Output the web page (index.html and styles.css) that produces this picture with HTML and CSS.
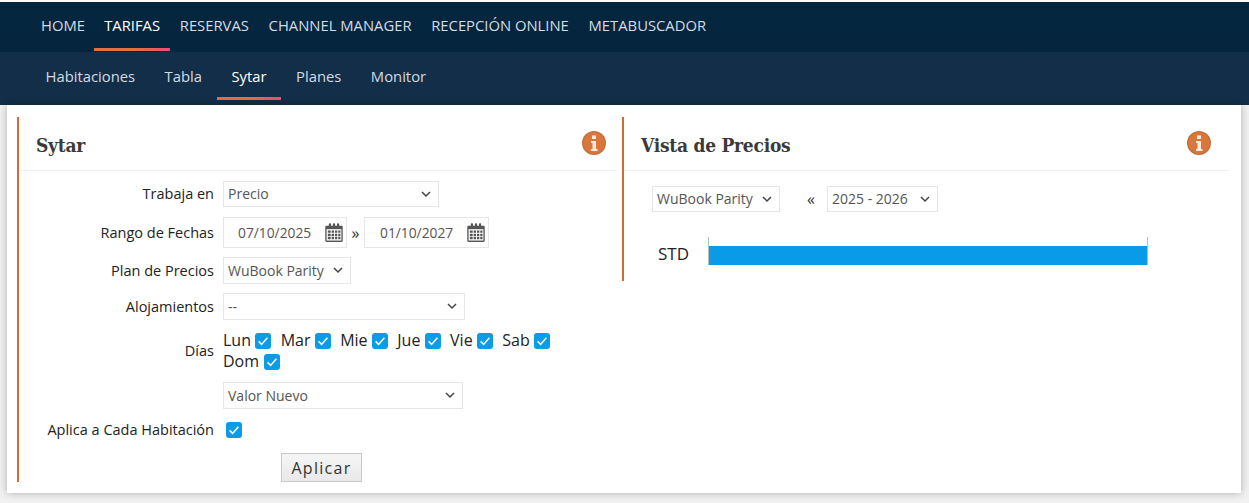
FILE: index.html
```html
<!DOCTYPE html>
<html lang="es">
<head>
<meta charset="utf-8">
<title>Sytar</title>
<link rel="stylesheet" href="styles.css">
</head>
<body>
<svg class="defs" width="0" height="0" aria-hidden="true">
  <defs>
    <symbol id="chk" viewBox="0 0 16 16">
      <rect width="16" height="16" rx="3" fill="#0c9be6"/>
      <path d="M3.6 8.4l3 3 5.8-6.6" fill="none" stroke="#fff" stroke-width="1.5"/>
    </symbol>
    <symbol id="cal" viewBox="0 0 19 20">
      <path fill="#555" d="M1.5 3H4V1.5a1.2 1.2 0 0 1 2.4 0V3h1.9V1.5a1.2 1.2 0 0 1 2.4 0V3h1.9V1.5a1.2 1.2 0 0 1 2.4 0V3h2.5A1.2 1.2 0 0 1 18.7 4.2v14.6a1.2 1.2 0 0 1-1.2 1.2h-16A1.2 1.2 0 0 1 .3 18.800V4.200A1.2 1.2 0 0 1 1.500 3z"/>
      <rect x="1.700" y="6.500" width="15.600" height="12" fill="#fff"/>
      <path fill="#555" d="M3 8h3v2.300H3zM7 8h2.500v2.300H7zM10.500 8H13v2.300h-2.500zM14 8h2.300v2.300H14zM3 11.300h3v2.300H3zM7 11.300h2.500v2.300H7zM10.500 11.300H13v2.300h-2.500zM14 11.300h2.300v2.300H14zM3 14.600h3V17H3zM7 14.600h2.500V17H7zM10.500 14.600H13V17h-2.500zM14 14.600h2.300V17H14z"/>
    </symbol>
    <symbol id="info" viewBox="0 0 24 24">
      <circle cx="12" cy="12" r="12" fill="#c0703f"/>
      <circle cx="12" cy="12" r="10.700" fill="#d9763a"/>
      <path fill="#fbeadf" d="M10 4.500h4v3.500h-4zM9 10h5v8h1.500v2h-6.500v-2h1.500v-6H9z"/>
    </symbol>
  </defs>
</svg>

<header class="topbar">
  <nav class="mainnav">
    <a class="mainlink" href="#">HOME</a>
    <a class="mainlink is-active" href="#">TARIFAS</a>
    <a class="mainlink" href="#">RESERVAS</a>
    <a class="mainlink" href="#">CHANNEL MANAGER</a>
    <a class="mainlink" href="#">RECEPCIÓN ONLINE</a>
    <a class="mainlink" href="#">METABUSCADOR</a>
  </nav>
  <nav class="subnav">
    <a class="sublink" href="#">Habitaciones</a>
    <a class="sublink" href="#">Tabla</a>
    <a class="sublink is-active" href="#">Sytar</a>
    <a class="sublink" href="#">Planes</a>
    <a class="sublink" href="#">Monitor</a>
  </nav>
</header>

<main class="card">
  <section class="panel panel-form">
    <div class="panel-head">
      <h2 class="panel-title">Sytar</h2>
      <svg class="info-icon"><use href="#info"/></svg>
    </div>
    <form class="form">
      <div class="row row-1">
        <label class="row-label">Trabaja en</label>
        <select class="sel w-216"><option>Precio</option></select>
      </div>
      <div class="row row-2">
        <label class="row-label">Rango de Fechas</label>
        <div class="dates">
          <span class="date"><span class="date-text">07/10/2025</span><svg class="cal"><use href="#cal"/></svg></span>
          <span class="date-sep">»</span>
          <span class="date"><span class="date-text">01/10/2027</span><svg class="cal"><use href="#cal"/></svg></span>
        </div>
      </div>
      <div class="row row-3">
        <label class="row-label">Plan de Precios</label>
        <select class="sel w-128"><option>WuBook Parity</option></select>
      </div>
      <div class="row row-4">
        <label class="row-label">Alojamientos</label>
        <select class="sel w-242"><option>--</option></select>
      </div>
      <div class="row row-5">
        <label class="row-label">Días</label>
        <div class="days">
          <span class="day">Lun<svg class="chk"><use href="#chk"/></svg></span>
          <span class="day">Mar<svg class="chk"><use href="#chk"/></svg></span>
          <span class="day">Mie<svg class="chk"><use href="#chk"/></svg></span>
          <span class="day">Jue<svg class="chk"><use href="#chk"/></svg></span>
          <span class="day">Vie<svg class="chk"><use href="#chk"/></svg></span>
          <span class="day">Sab<svg class="chk"><use href="#chk"/></svg></span>
          <span class="day">Dom<svg class="chk"><use href="#chk"/></svg></span>
        </div>
      </div>
      <div class="row row-6">
        <span class="row-label"></span>
        <select class="sel w-240"><option>Valor Nuevo</option></select>
      </div>
      <div class="row row-7">
        <label class="row-label">Aplica a Cada Habitación</label>
        <svg class="chk chk-solo"><use href="#chk"/></svg>
      </div>
      <div class="actions"><button class="btn" type="button">Aplicar</button></div>
    </form>
  </section>

  <section class="panel panel-view">
    <div class="panel-head">
      <h2 class="panel-title">Vista de Precios</h2>
      <svg class="info-icon"><use href="#info"/></svg>
    </div>
    <div class="view-controls">
      <select class="sel w-128"><option>WuBook Parity</option></select>
      <span class="prev">«</span>
      <select class="sel w-111"><option>2025 - 2026</option></select>
    </div>
    <div class="chart">
      <span class="chart-label">STD</span>
      <div class="chart-track"><div class="chart-bar"></div></div>
    </div>
  </section>
</main>
</body>
</html>
```
FILE: styles.css
```css
* { box-sizing: border-box; }
html, body { margin: 0; padding: 0; }
body {
  height: 503px;
  overflow: hidden;
  background: #f1f1f1;
  font-family: "Open Sans", "Noto Sans", sans-serif;
  color: #222;
}
.defs { position: absolute; }

.topbar { padding-top: 2px; background: #fff; }
.mainnav {
  height: 50px;
  background: linear-gradient(#04263f, #05253e);
  display: flex;
  padding-left: 31px;
}
.mainlink {
  height: 50px;
  padding: 14px 10px 0;
  margin-right: -0.3px;
  font-size: 14.800px;
  line-height: 18px;
  color: #d5dce2;
  text-decoration: none;
  position: relative;
  white-space: nowrap;
}
.mainlink:first-child { padding-right: 9.500px; }
.mainlink.is-active { color: #fff; }
.mainlink.is-active::after,
.sublink.is-active::after {
  content: "";
  position: absolute;
  left: 0;
  right: 0;
  height: 3px;
  background: linear-gradient(90deg, #e8703a 0, #e8703a 50%, #ee4c7c 100%);
}
.mainlink.is-active::after { bottom: 1px; }
.subnav {
  height: 53px;
  background: #132e48;
  display: flex;
  padding-left: 30.750px;
}
.sublink {
  height: 53px;
  padding: 14px 14.750px 0;
  font-size: 14.800px;
  line-height: 20px;
  color: #d3dbe2;
  text-decoration: none;
  position: relative;
  white-space: nowrap;
}
.sublink.is-active { color: #fff; }
.sublink.is-active::after { bottom: 5px; }

.card {
  width: 1234px;
  height: 388px;
  margin-left: 7px;
  padding: 12px 12px 0 10px;
  background: #fff;
  box-shadow: 0 0 8px rgba(0, 0, 0, .28);
  display: flex;
  align-items: flex-start;
  position: relative;
}
.panel { border-left: 2px solid #d26c34; }
.panel-form { width: 605px; height: 365px; }
.panel-view { width: 607px; height: 164px; }
.panel-head {
  height: 54px;
  border-bottom: 1px solid #f0f0f0;
  display: flex;
  justify-content: space-between;
  padding: 14px 0 0 17px;
}
.panel-form .panel-head { margin-right: 5px; }
.panel-title {
  margin: 0;
  font-family: "DejaVu Serif", "Liberation Serif", serif;
  font-stretch: condensed;
  font-weight: 700;
  font-size: 19px;
  line-height: 28px;
  letter-spacing: -0.25px;
  color: #3a3a3a;
}
.info-icon { width: 24px; height: 24px; margin-top: 0; margin-right: 11px; }
.panel-view .info-icon { margin-right: 18px; }

.row { display: flex; align-items: center; }
.row-label {
  width: 195px;
  margin-right: 9px;
  text-align: right;
  font-size: 14.500px;
  line-height: 18px;
  color: #222;
  flex: none;
}
.row-1 { margin-top: 10px; }
.row-2 { margin-top: 10px; }
.row-3 { margin-top: 9px; }
.row-4 { margin-top: 9px; }
.row-5 { margin-top: 10px; }
.row-6 { margin-top: 10px; }
.row-7 { margin-top: 12px; height: 18px; }

.sel {
  display: block;
  appearance: none;
  -webkit-appearance: none;
  height: 26px;
  border: 1px solid #e6e6e6;
  border-radius: 0;
  background: #fff url("data:image/svg+xml,%3Csvg xmlns='http://www.w3.org/2000/svg' width='10' height='7'%3E%3Cpath d='M1 1l4 4 4-4' fill='none' stroke='%23444' stroke-width='1.500'/%3E%3C/svg%3E") no-repeat right 7px center;
  font-family: inherit;
  font-size: 14px;
  color: #555;
  padding: 0 0 1px 4px;
}
.w-216 { width: 216px; }
.w-128 { width: 128px; height: 27px; }
.w-242 { width: 242px; height: 27px; }
.w-240 { width: 240px; height: 27px; }
.w-111 { width: 111px; height: 26px; }

.dates { display: flex; align-items: center; }
.date {
  width: 124px;
  height: 31px;
  border: 1px solid #e6e6e6;
  display: flex;
  align-items: center;
  justify-content: space-between;
  padding: 0 3px 0 14px;
  font-size: 13.800px;
  color: #555;
}
.date + .date-sep + .date { width: 125px; padding-left: 15px; }
.date-sep { width: 17px; text-align: center; font-size: 16px; color: #333; }
.cal { width: 18px; height: 19px; }

.days { width: 340px; display: flex; flex-wrap: wrap; font-size: 16px; line-height: 21px; color: #222; }
.day { display: inline-flex; align-items: center; margin-right: 9.200px; white-space: nowrap; }
.chk { width: 16px; height: 16px; margin-left: 4.500px; flex: none; }
.chk-solo { margin-left: 3px; }

.actions { margin-top: 14px; padding-left: 262px; }
.btn {
  width: 81px;
  height: 29px;
  padding: 0;
  border: 1px solid #c9c9c9;
  background: linear-gradient(#f5f5f5, #e9e9e9);
  font-family: inherit;
  font-size: 16px;
  letter-spacing: 1.300px;
  color: #333;
}

.view-controls { display: flex; align-items: center; margin-top: 15px; padding-left: 28px; }
.prev { width: 47px; padding-left: 15px; text-align: center; font-size: 16px; color: #333; }
.view-controls .w-128 { height: 26px; }
.chart { display: flex; margin-top: 25px; padding-left: 34px; }
.chart-label { width: 50px; font-size: 17px; line-height: 22px; margin-top: 6px; color: #222; }
.chart-track {
  width: 440px;
  height: 28px;
  border-left: 1px solid #bbb;
  border-right: 1px solid #bbb;
  position: relative;
}
.chart-bar { position: absolute; left: 0; right: 0; top: 9px; height: 19px; background: #0a9be8; }
```
